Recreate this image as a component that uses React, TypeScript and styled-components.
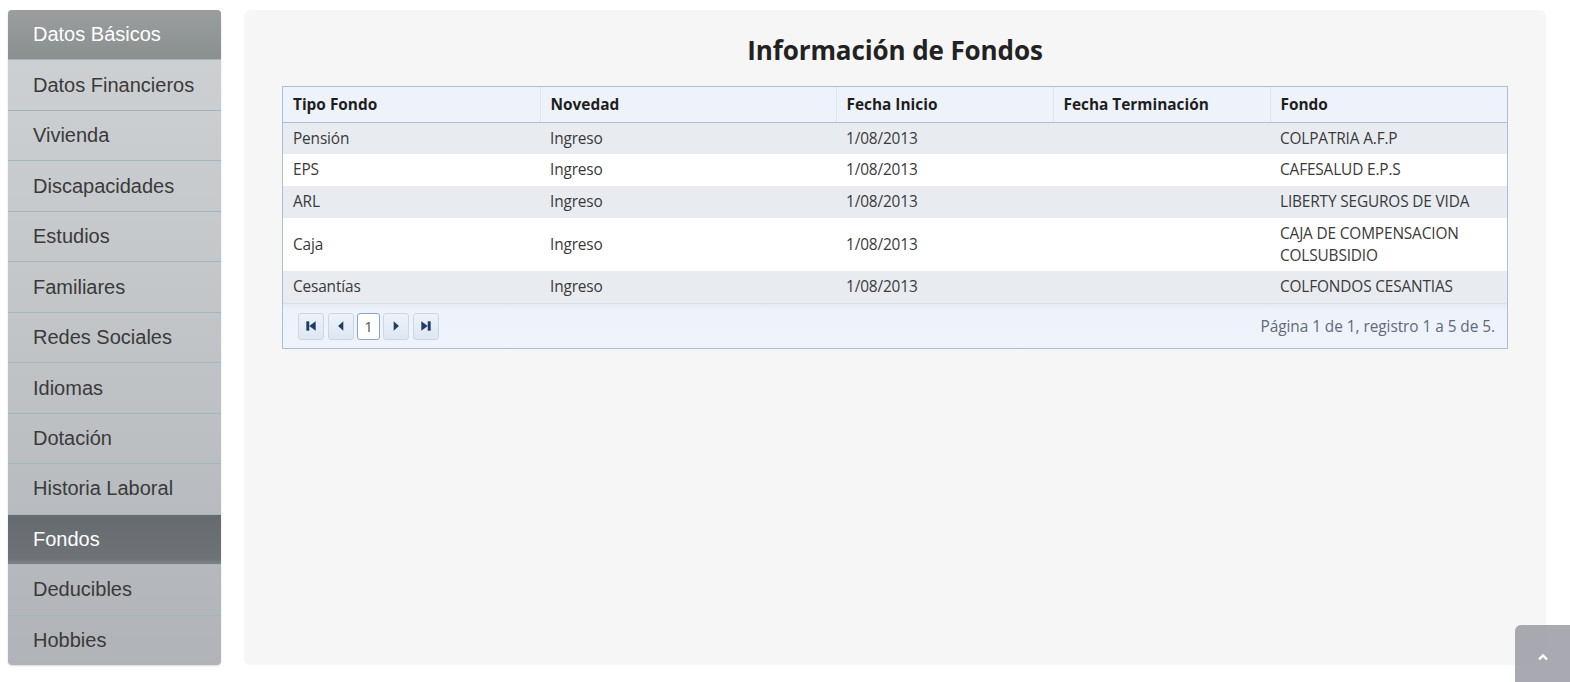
import React from "react";
import styled, { createGlobalStyle } from "styled-components";

const Global = createGlobalStyle`
  html, body { margin: 0; padding: 0; background: #ffffff; }
  body { font-family: "Open Sans", "Noto Sans", sans-serif; }
  * { box-sizing: border-box; }
`;

const Page = styled.div`
  display: flex;
  align-items: flex-start;
  gap: 23px;
  padding: 10px 25px 0 8px;
  height: 682px;
`;

const Sidebar = styled.nav`
  width: 213px;
  height: 655px;
  flex: none;
  display: flex;
  flex-direction: column;
  border-radius: 4px;
  overflow: hidden;
  background: linear-gradient(to bottom, #cfd2d5 0%, #c3c6c9 45%, #b0b3b7 100%);
  box-shadow: 0 1px 2px rgba(0, 0, 0, 0.15);
`;

const NavItem = styled.div<{ $variant?: "top" | "active" }>`
  flex: 1;
  display: flex;
  align-items: center;
  padding: 0 0 0 25px;
  font-family: "Liberation Sans", Arial, sans-serif;
  font-size: 20px;
  color: ${(p) => (p.$variant ? "#ffffff" : "#3a3a3a")};
  border-top: ${(p) => (p.$variant === "top" ? "none" : "1px solid #a3b7b7")};
  background: ${(p) =>
    p.$variant === "top"
      ? "linear-gradient(to bottom, #9a9e9e 0%, #8a8f8f 100%)"
      : p.$variant === "active"
      ? "linear-gradient(to bottom, #656a6f 0%, #6f7378 90%, #7f8488 100%)"
      : "transparent"};
`;

const Main = styled.main`
  flex: 1;
  height: 655px;
  background: #f6f6f6;
  border-radius: 6px;
  padding: 0 38px 0 38px;
  display: flex;
  flex-direction: column;
`;

const Title = styled.h2`
  margin: 0;
  height: 76px;
  display: flex;
  align-items: center;
  justify-content: center;
  padding-top: 4px;
  font-family: "Open Sans", "Noto Sans", sans-serif;
  font-size: 26px;
  font-weight: 700;
  color: #222222;
  letter-spacing: -0.1px;
`;

const Grid = styled.div`
  border: 1px solid #a9c0dc;
  background: #ffffff;
  font-size: 15.4px;
  color: #3a3a3a;
`;

const Table = styled.table`
  width: 100%;
  border-collapse: collapse;
  table-layout: fixed;
`;

const Th = styled.th`
  text-align: left;
  font-weight: 700;
  color: #1e1e1e;
  background: #eef3fb;
  height: 35px;
  padding: 0 10px;
  border-bottom: 1px solid #a9c0dc;
  border-left: 1px solid #dfe6f0;
  &:first-child { border-left: none; }
`;

const Tr = styled.tr<{ $alt?: boolean }>`
  background: ${(p) => (p.$alt ? "#e8ecf1" : "#ffffff")};
`;

const Td = styled.td`
  padding: 5px 10px;
  height: 32px;
  line-height: 21.5px;
  vertical-align: middle;
  letter-spacing: -0.15px;
`;

const Footer = styled.div`
  height: 45px;
  display: flex;
  align-items: center;
  justify-content: space-between;
  padding: 0 12px 0 15px;
  background: linear-gradient(to bottom, #e4ebf4 0px, #eef3fb 6px, #eff3fb 100%);
  border-top: 1px solid #d7e0ea;
`;

const Pager = styled.div`
  display: flex;
  align-items: center;
  gap: 4px;
`;

const PagerButton = styled.button`
  width: 26px;
  height: 27px;
  padding: 0;
  display: flex;
  align-items: center;
  justify-content: center;
  border: 1px solid #cdd7e3;
  border-radius: 3px;
  background: linear-gradient(to bottom, #eef3fa 0%, #dde6f1 100%);
  color: #1f3d63;
  cursor: pointer;
`;

const PageBox = styled.div`
  width: 23px;
  height: 27px;
  margin: 0 -1px;
  display: flex;
  align-items: center;
  justify-content: center;
  border: 1px solid #8ea6c4;
  border-radius: 3px;
  background: #ffffff;
  color: #555555;
  font-size: 15px;
`;

const Summary = styled.span`
  color: #5f6a78;
  font-size: 15.4px;
  letter-spacing: -0.05px;
`;

const ScrollTop = styled.button`
  position: fixed;
  right: 0;
  bottom: 0;
  width: 55px;
  height: 57px;
  border: none;
  border-top-left-radius: 6px;
  background: rgba(150, 151, 160, 0.82);
  display: flex;
  align-items: center;
  justify-content: center;
  padding: 6px 0 0 0;
`;

const Icon = ({ kind }: { kind: "first" | "prev" | "next" | "last" }) => (
  <svg width="14" height="14" viewBox="0 0 12 12" fill="#1f3d63">
    {kind === "first" && (
      <>
        <rect x="2" y="2" width="2.5" height="8" />
        <polygon points="10,2 10,10 4.5,6" />
      </>
    )}
    {kind === "prev" && <polygon points="8,2 8,10 3.5,6" />}
    {kind === "next" && <polygon points="4,2 4,10 8.5,6" />}
    {kind === "last" && (
      <>
        <rect x="7.5" y="2" width="2.5" height="8" />
        <polygon points="2,2 2,10 7.5,6" />
      </>
    )}
  </svg>
);

const menu = [
  "Datos Básicos",
  "Datos Financieros",
  "Vivienda",
  "Discapacidades",
  "Estudios",
  "Familiares",
  "Redes Sociales",
  "Idiomas",
  "Dotación",
  "Historia Laboral",
  "Fondos",
  "Deducibles",
  "Hobbies",
];

const rows = [
  ["Pensión", "Ingreso", "1/08/2013", "", "COLPATRIA A.F.P"],
  ["EPS", "Ingreso", "1/08/2013", "", "CAFESALUD E.P.S"],
  ["ARL", "Ingreso", "1/08/2013", "", "LIBERTY SEGUROS DE VIDA"],
  ["Caja", "Ingreso", "1/08/2013", "", "CAJA DE COMPENSACION COLSUBSIDIO"],
  ["Cesantías", "Ingreso", "1/08/2013", "", "COLFONDOS CESANTIAS"],
];

const headers = ["Tipo Fondo", "Novedad", "Fecha Inicio", "Fecha Terminación", "Fondo"];
const widths = [257, 296, 217, 217, 237];

export default function App() {
  return (
    <>
      <Global />
      <Page>
        <Sidebar>
          {menu.map((m, i) => (
            <NavItem
              key={m}
              $variant={i === 0 ? "top" : m === "Fondos" ? "active" : undefined}
            >
              {m}
            </NavItem>
          ))}
        </Sidebar>
        <Main>
          <Title>Información de Fondos</Title>
          <Grid>
            <Table>
              <colgroup>
                {widths.map((w, i) => (
                  <col key={i} style={{ width: w }} />
                ))}
              </colgroup>
              <thead>
                <tr>
                  {headers.map((h) => (
                    <Th key={h}>{h}</Th>
                  ))}
                </tr>
              </thead>
              <tbody>
                {rows.map((r, i) => (
                  <Tr key={i} $alt={i % 2 === 0}>
                    {r.map((c, j) => (
                      <Td key={j}>{c}</Td>
                    ))}
                  </Tr>
                ))}
              </tbody>
            </Table>
            <Footer>
              <Pager>
                <PagerButton aria-label="first"><Icon kind="first" /></PagerButton>
                <PagerButton aria-label="prev"><Icon kind="prev" /></PagerButton>
                <PageBox>1</PageBox>
                <PagerButton aria-label="next"><Icon kind="next" /></PagerButton>
                <PagerButton aria-label="last"><Icon kind="last" /></PagerButton>
              </Pager>
              <Summary>Página 1 de 1, registro 1 a 5 de 5.</Summary>
            </Footer>
          </Grid>
        </Main>
      </Page>
      <ScrollTop aria-label="top">
        <svg width="12" height="8" viewBox="0 0 12 8">
          <polyline points="2,6.5 6,2.5 10,6.5" fill="none" stroke="#ffffff" strokeWidth="2.4" />
        </svg>
      </ScrollTop>
    </>
  );
}
